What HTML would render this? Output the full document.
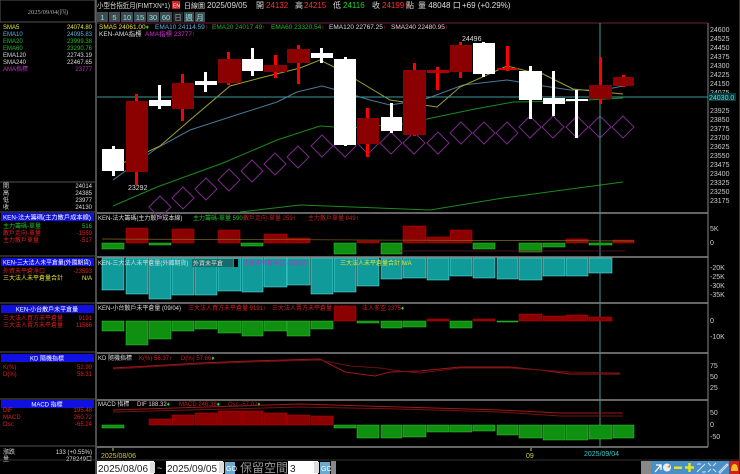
<!DOCTYPE html>
<html><head><meta charset="utf-8"><style>
html,body{margin:0;padding:0;background:#000;width:740px;height:474px;overflow:hidden}
svg{display:block}
text{font-family:"Liberation Sans","Noto Sans CJK TC",sans-serif}
.s{font-family:"Liberation Serif","Noto Serif CJK SC",serif}
</style></head><body>
<svg width="740" height="474" viewBox="0 0 740 474" xmlns="http://www.w3.org/2000/svg">
<rect width="740" height="474" fill="#000"/>
<!-- left panel -->
<rect x="0" y="0" width="95" height="22" fill="#000" stroke="#555" stroke-width="1"/>
<text x="48" y="14" font-size="6.5" fill="#aaa" text-anchor="middle" class="s">2025/09/04(四)</text>
<line x1="96" y1="0" x2="96" y2="474" stroke="#666" stroke-width="1.5"/>
<g font-size="6" class="s">
<text x="3" y="29" fill="#e8e830">SMA5</text><text x="92" y="29" fill="#e8e830" text-anchor="end">24074.80</text>
<text x="3" y="36" fill="#5ab4e0">EMA10</text><text x="92" y="36" fill="#5ab4e0" text-anchor="end">24095.83</text>
<text x="3" y="43" fill="#20c020">EMA20</text><text x="92" y="43" fill="#20c020" text-anchor="end">23999.38</text>
<text x="3" y="50" fill="#20c020">EMA60</text><text x="92" y="50" fill="#20c020" text-anchor="end">23290.76</text>
<text x="3" y="57" fill="#ddd">EMA120</text><text x="92" y="57" fill="#ddd" text-anchor="end">22743.19</text>
<text x="3" y="64" fill="#ddd">SMA240</text><text x="92" y="64" fill="#ddd" text-anchor="end">22467.65</text>
<text x="3" y="71" fill="#c030c0">AMA指標</text><text x="92" y="71" fill="#c030c0" text-anchor="end">23777</text>
<text x="3" y="188" fill="#ddd">開</text><text x="92" y="188" fill="#ddd" text-anchor="end">24014</text>
<text x="3" y="195" fill="#ddd">高</text><text x="92" y="195" fill="#ddd" text-anchor="end">24385</text>
<text x="3" y="202" fill="#ddd">低</text><text x="92" y="202" fill="#ddd" text-anchor="end">23977</text>
<text x="3" y="209" fill="#ddd">收</text><text x="92" y="209" fill="#ddd" text-anchor="end">24130</text>
</g>
<line x1="0" y1="182" x2="95" y2="182" stroke="#555"/>
<g font-size="6" class="s">
<rect x="1" y="213" width="93" height="8" fill="#1010e0"/><text x="47" y="219.5" fill="#fff" text-anchor="middle" textLength="88" lengthAdjust="spacingAndGlyphs">KEN-法大籌碼(主力散戶成本線)</text>
<text x="3" y="228" fill="#20c020">主力籌碼-單量</text><text x="92" y="228" fill="#20c020" text-anchor="end">516</text>
<text x="3" y="235" fill="#e02020">散戶走向-單量</text><text x="92" y="235" fill="#e02020" text-anchor="end">-1559</text>
<text x="3" y="242" fill="#e02020">主力散戶單量</text><text x="92" y="242" fill="#e02020" text-anchor="end">-517</text>
<rect x="1" y="258" width="93" height="8" fill="#1010e0"/><text x="47" y="264.5" fill="#fff" text-anchor="middle" textLength="88" lengthAdjust="spacingAndGlyphs">KEN-三大法人未平倉量(外國期貨)</text>
<text x="3" y="273" fill="#e02020">外資未平倉淨口</text><text x="92" y="273" fill="#e02020" text-anchor="end">-23593</text>
<text x="3" y="280" fill="#e8e830">三大法人未平倉量合計</text><text x="92" y="280" fill="#e8e830" text-anchor="end">N/A</text>
<rect x="1" y="305" width="93" height="8" fill="#1010e0"/><text x="47" y="311.5" fill="#fff" text-anchor="middle">KEN-小台散戶未平倉量</text>
<text x="3" y="320" fill="#e02020">三大法人買方未平倉量</text><text x="92" y="320" fill="#e02020" text-anchor="end">9191</text>
<text x="3" y="327" fill="#e02020">三大法人賣方未平倉量</text><text x="92" y="327" fill="#e02020" text-anchor="end">11566</text>
<rect x="1" y="354" width="93" height="8" fill="#1010e0"/><text x="47" y="360.5" fill="#fff" text-anchor="middle">KD 隨機指標</text>
<text x="3" y="369" fill="#e02020">K(%)</text><text x="92" y="369" fill="#e02020" text-anchor="end">52.99</text>
<text x="3" y="376" fill="#e02020">D(%)</text><text x="92" y="376" fill="#e02020" text-anchor="end">58.31</text>
<rect x="1" y="400" width="93" height="8" fill="#1010e0"/><text x="47" y="406.5" fill="#fff" text-anchor="middle">MACD 指標</text>
<text x="3" y="412" fill="#e02020">DIF</text><text x="92" y="412" fill="#e02020" text-anchor="end">195.48</text>
<text x="3" y="419" fill="#e02020">MACD</text><text x="92" y="419" fill="#e02020" text-anchor="end">260.72</text>
<text x="3" y="426" fill="#e02020">Osc</text><text x="92" y="426" fill="#e02020" text-anchor="end">-65.24</text>
<text x="3" y="454" fill="#ddd">漲跌</text><text x="92" y="454" fill="#ddd" text-anchor="end">133 (+0.55%)</text>
<text x="3" y="461" fill="#ddd">量</text><text x="92" y="461" fill="#ddd" text-anchor="end">278249口</text>
</g>
<g stroke="#555"><line x1="0" y1="212" x2="95" y2="212"/><line x1="0" y1="256" x2="95" y2="256"/><line x1="0" y1="303" x2="95" y2="303"/><line x1="0" y1="352" x2="95" y2="352"/><line x1="0" y1="399" x2="95" y2="399"/><line x1="0" y1="446" x2="95" y2="446"/></g>

<!-- header -->
<text x="97" y="8" font-size="7.5" fill="#ddd" textLength="73" lengthAdjust="spacingAndGlyphs">小型台指近月(FIMTXN*1)</text>
<rect x="172" y="1" width="8" height="8" fill="#d02020"/><text x="173" y="7.5" font-size="5" fill="#fff">EN</text>
<g font-size="8">
<text x="184" y="8" fill="#ddd" font-size="7">日線圖</text>
<text x="207" y="8" fill="#ddd">2025/09/05</text>
<text x="256" y="8" fill="#ddd">開</text><text x="266" y="8" fill="#ff3030">24132</text>
<text x="295" y="8" fill="#ddd">高</text><text x="304" y="8" fill="#ff3030">24215</text>
<text x="333" y="8" fill="#ddd">低</text><text x="343" y="8" fill="#20d020">24116</text>
<text x="372" y="8" fill="#ddd">收</text><text x="382" y="8" fill="#ff3030">24199↑</text>
<text x="406" y="8" fill="#ddd">點</text><text x="418" y="8" fill="#ddd">量 48048 口</text><text x="462" y="8" fill="#ddd">+69 (+0.29%)</text>
</g>
<!-- buttons -->
<g font-size="7.5" fill="#8de0e0" text-anchor="middle">
<rect x="97" y="12" width="11" height="10" fill="#3e4c52"/><text x="102.5" y="20">1</text>
<rect x="109" y="12" width="11" height="10" fill="#3e4c52"/><text x="114.5" y="20">5</text>
<rect x="121" y="12" width="12" height="10" fill="#3e4c52"/><text x="127" y="20">10</text>
<rect x="134" y="12" width="12" height="10" fill="#3e4c52"/><text x="140" y="20">15</text>
<rect x="147" y="12" width="12" height="10" fill="#3e4c52"/><text x="153" y="20">30</text>
<rect x="160" y="12" width="12" height="10" fill="#3e4c52"/><text x="166" y="20">60</text>
<rect x="173" y="12" width="10" height="10" fill="#1c2428"/><text x="178" y="20" fill="#aaa">日</text>
<rect x="184" y="12" width="10" height="10" fill="#3e4c52"/><text x="189" y="20">週</text>
<rect x="195" y="12" width="10" height="10" fill="#3e4c52"/><text x="200" y="20">月</text>
</g>
<!-- main frame -->
<line x1="97" y1="23" x2="708" y2="23" stroke="#6a2040"/>
<line x1="708" y1="23" x2="708" y2="447" stroke="#888"/>
<g stroke="#888" stroke-width="1.5">
<line x1="97" y1="213" x2="708" y2="213"/><line x1="97" y1="257" x2="708" y2="257"/><line x1="97" y1="303" x2="708" y2="303"/><line x1="97" y1="353" x2="708" y2="353"/><line x1="97" y1="400" x2="708" y2="400"/><line x1="97" y1="447" x2="708" y2="447"/>
</g>
<!-- legend -->
<g font-size="6.5">
<text x="99" y="29" fill="#e8e830">SMA5 24061.00<tspan fill="#20d020">♦</tspan></text>
<text x="155" y="29" fill="#5ab4e0">EMA10 24114.59<tspan fill="#f33">↑</tspan></text>
<text x="212" y="29" fill="#20b020">EMA20 24017.49<tspan fill="#f33">↑</tspan></text>
<text x="271" y="29" fill="#20c020">EMA60 23320.54<tspan fill="#f33">↑</tspan></text>
<text x="329" y="29" fill="#ddd">EMA120 22767.25<tspan fill="#f33">↑</tspan></text>
<text x="391" y="29" fill="#e8c8c8">SMA240 22480.95<tspan fill="#f33">↑</tspan></text>
<text x="99" y="36" fill="#ddd">KEN-AMA指標</text>
<text x="145" y="36" fill="#d030d0">AMA指標 23777<tspan fill="#f33">↑</tspan></text>
</g>
<!-- diamonds -->
<g fill="none" stroke="#7a2a8a" stroke-width="1">
<path d="M149,207 l11,-11 l11,11 l-11,11z M172,198 l11,-11 l11,11 l-11,11z M195,189 l11,-11 l11,11 l-11,11z M218,180 l11,-11 l11,11 l-11,11z M241,171 l11,-11 l11,11 l-11,11z M264,164 l11,-11 l11,11 l-11,11z M287,157 l11,-11 l11,11 l-11,11z M311,146 l11,-11 l11,11 l-11,11z M334,146 l11,-11 l11,11 l-11,11z M357,143 l11,-11 l11,11 l-11,11z M380,143 l11,-11 l11,11 l-11,11z M403,143 l11,-11 l11,11 l-11,11z M427,143 l11,-11 l11,11 l-11,11z M450,133 l11,-11 l11,11 l-11,11z M473,133 l11,-11 l11,11 l-11,11z M496,133 l11,-11 l11,11 l-11,11z M519,127 l11,-11 l11,11 l-11,11z M542,127 l11,-11 l11,11 l-11,11z M566,127 l11,-11 l11,11 l-11,11z M589,127 l11,-11 l11,11 l-11,11z M612,127 l11,-11 l11,11 l-11,11z"/>
</g>
<!-- MA lines -->
<polyline fill="none" stroke="#1c8a1c" points="113,206 157,187 223,163 277,140 320,126 350,128 403,124 470,110 513,102 570,101 623,98"/>
<polyline fill="none" stroke="#1c8a1c" points="240,212 300,205 430,210 503,198 623,182"/>
<polyline fill="none" stroke="#4a7a9a" points="113,180 157,148 190,130 230,117 277,102 297,92 322,86 337,90 370,100 390,105 423,100 463,85 507,80 537,85 570,90 603,90 623,86"/>
<polyline fill="none" stroke="#a0a030" points="110,168 130,160 160,146 190,120 230,86 260,78 300,68 320,60 340,70 370,88 390,100 437,107 460,87 507,66 527,71 543,74 573,89 603,92 623,94"/>
<!-- crosshair -->
<line x1="97" y1="97" x2="708" y2="97" stroke="#3a9a9a"/>
<line x1="600" y1="23" x2="600" y2="447" stroke="#3a9a9a"/>
<!-- candles -->
<g>
<rect x="112" y="146" width="3" height="30" fill="#fff"/><rect x="102" y="149" width="22" height="22" fill="#fff"/>
<rect x="135" y="94" width="3" height="91" fill="#f00"/><rect x="126" y="101" width="22" height="71" fill="#8b0000"/>
<rect x="158" y="85" width="3" height="24" fill="#fff"/><rect x="149" y="100" width="22" height="6" fill="#fff"/>
<rect x="181" y="74" width="3" height="47" fill="#f00"/><rect x="172" y="83" width="22" height="26" fill="#8b0000"/>
<rect x="204" y="72" width="3" height="20" fill="#fff"/><rect x="195" y="81" width="22" height="4" fill="#fff"/>
<rect x="227" y="52" width="3" height="33" fill="#f00"/><rect x="218" y="59" width="23" height="24" fill="#8b0000"/>
<rect x="251" y="48" width="3" height="28" fill="#fff"/><rect x="242" y="59" width="21" height="12" fill="#fff"/>
<rect x="274" y="55" width="3" height="23" fill="#f00"/><rect x="264" y="65" width="23" height="7" fill="#8b0000"/>
<rect x="297" y="45" width="3" height="39" fill="#f00"/><rect x="287" y="49" width="23" height="14" fill="#8b0000"/>
<rect x="320" y="48" width="3" height="15" fill="#fff"/><rect x="311" y="53" width="22" height="5" fill="#fff"/>
<rect x="344" y="57" width="3" height="89" fill="#fff"/><rect x="334" y="59" width="22" height="86" fill="#fff"/>
<rect x="366" y="108" width="3" height="49" fill="#f00"/><rect x="357" y="118" width="22" height="26" fill="#8b0000"/>
<rect x="390" y="103" width="3" height="30" fill="#fff"/><rect x="381" y="117" width="21" height="14" fill="#fff"/>
<rect x="413" y="63" width="3" height="73" fill="#f00"/><rect x="403" y="70" width="23" height="65" fill="#8b0000"/>
<rect x="436" y="67" width="3" height="23" fill="#f00"/><rect x="427" y="70" width="22" height="3" fill="#b00000"/>
<rect x="459" y="42" width="3" height="36" fill="#f00"/><rect x="450" y="45" width="22" height="27" fill="#8b0000"/>
<rect x="482" y="42" width="3" height="35" fill="#fff"/><rect x="473" y="43" width="22" height="31" fill="#fff"/>
<rect x="506" y="46" width="3" height="25" fill="#f00"/><rect x="497" y="68" width="21" height="2" fill="#d00"/>
<rect x="529" y="66" width="3" height="53" fill="#fff"/><rect x="519" y="71" width="23" height="29" fill="#fff"/>
<rect x="552" y="71" width="3" height="45" fill="#fff"/><rect x="543" y="98" width="22" height="6" fill="#fff"/>
<rect x="575" y="90" width="3" height="48" fill="#fff"/><rect x="566" y="99" width="22" height="2" fill="#fff"/>
<rect x="599" y="57" width="3" height="47" fill="#f00"/><rect x="589" y="85" width="23" height="14" fill="#8b0000"/>
<rect x="622" y="75" width="3" height="12" fill="#f00"/><rect x="613" y="77" width="21" height="9" fill="#8b0000"/>
</g>
<text x="462" y="41" font-size="7" fill="#ddd">24496</text>
<text x="128" y="190" font-size="7" fill="#ddd">23292</text>
<!-- price axis -->
<g font-size="7" fill="#ccc">
<text x="710" y="32">24600</text><text x="710" y="41">24525</text><text x="710" y="50">24450</text><text x="710" y="59">24375</text><text x="710" y="68">24300</text><text x="710" y="77">24225</text><text x="710" y="86">24150</text><text x="710" y="95">24075</text><text x="710" y="113">23925</text><text x="710" y="122">23850</text><text x="710" y="131">23775</text><text x="710" y="140">23700</text><text x="710" y="149">23625</text><text x="710" y="158">23550</text><text x="710" y="167">23475</text><text x="710" y="176">23400</text><text x="710" y="185">23325</text><text x="710" y="194">23250</text><text x="710" y="203">23175</text>
</g>
<rect x="708" y="93" width="28" height="8" fill="#0a3a3a"/><text x="709" y="100" font-size="7" fill="#40e0e0">24030.0</text>
<!-- panel 1 -->
<text x="98" y="220" font-size="6" fill="#ddd">KEN-法大籌碼(主力散戶成本線)</text>
<text x="193" y="220" font-size="6" fill="#20c020">主力籌碼-單量 590<tspan fill="#f33">↑</tspan></text>
<text x="243" y="220" font-size="6" fill="#c02020">散戶走向-單量 259<tspan fill="#f33">↑</tspan></text>
<text x="308" y="220" font-size="6" fill="#c02020">主力散戶單量 849<tspan fill="#f33">↑</tspan></text>
<g fill="#8b0000" stroke="#c00" stroke-width=".5">
<rect x="126" y="228" width="22" height="15"/><rect x="172" y="229" width="22" height="14"/><rect x="218" y="230" width="22" height="13"/><rect x="264" y="234" width="23" height="9"/><rect x="287" y="238" width="23" height="5"/><rect x="357" y="241" width="22" height="2"/><rect x="403" y="226" width="23" height="17"/><rect x="427" y="237" width="22" height="6"/><rect x="450" y="230" width="22" height="13"/><rect x="566" y="239" width="22" height="4"/><rect x="613" y="240" width="21" height="3"/>
</g>
<g fill="#109010" stroke="#3c3" stroke-width=".5">
<rect x="102" y="243" width="22" height="6"/><rect x="149" y="243" width="22" height="2"/><rect x="241" y="243" width="22" height="3"/><rect x="334" y="243" width="22" height="11"/><rect x="381" y="243" width="21" height="11"/><rect x="473" y="243" width="22" height="6"/><rect x="519" y="243" width="23" height="9"/><rect x="543" y="243" width="22" height="4"/><rect x="589" y="243" width="23" height="2"/>
</g>
<line x1="102" y1="239" x2="634" y2="241" stroke="#8a6a20" stroke-width=".7"/>
<line x1="400" y1="251" x2="625" y2="251" stroke="#6a1030" stroke-width=".7"/>
<g font-size="7" fill="#ccc"><text x="710" y="231">5K</text><text x="710" y="245">0</text></g>
<!-- panel 2 cyan -->
<g fill="#109a9a" stroke="#6ee" stroke-width=".5">
<rect x="102" y="258" width="22" height="32"/><rect x="126" y="258" width="22" height="36"/><rect x="149" y="258" width="22" height="41"/><rect x="172" y="258" width="22" height="37"/><rect x="195" y="258" width="22" height="37"/><rect x="218" y="258" width="23" height="33"/><rect x="242" y="258" width="21" height="34"/><rect x="264" y="258" width="23" height="29"/><rect x="287" y="258" width="23" height="27"/><rect x="311" y="258" width="22" height="36"/><rect x="334" y="258" width="22" height="34"/><rect x="357" y="258" width="22" height="28"/><rect x="381" y="258" width="21" height="21"/><rect x="403" y="258" width="23" height="20"/><rect x="427" y="258" width="22" height="22"/><rect x="450" y="258" width="22" height="18"/><rect x="473" y="258" width="22" height="20"/><rect x="497" y="258" width="21" height="21"/><rect x="519" y="258" width="23" height="22"/><rect x="543" y="258" width="22" height="18"/><rect x="566" y="258" width="22" height="18"/><rect x="589" y="258" width="23" height="15"/>
</g>
<text x="98" y="265" font-size="6" fill="#ddd">KEN-三大法人未平倉量(外國期貨)</text>
<rect x="192" y="259" width="41" height="8" fill="#1a6a6a"/><text x="193" y="265.5" font-size="6" fill="#ddd">外資未平倉</text>
<rect x="234" y="259" width="4" height="8" fill="#000"/>
<text x="243" y="265" font-size="6" fill="#c030c0">外資未平倉淨口 -23593<tspan fill="#f33">↑</tspan></text>
<text x="340" y="265" font-size="6" fill="#e8e830">三大法人未平倉量合計 N/A</text>
<g font-size="7" fill="#ccc"><text x="710" y="270">-20K</text><text x="710" y="279">-25K</text><text x="710" y="288">-30K</text><text x="710" y="297">-35K</text></g>
<!-- panel 3 -->
<text x="98" y="310" font-size="6" fill="#ddd">KEN-小台散戶未平倉量 (09/04)</text>
<text x="188" y="310" font-size="6" fill="#e02020">三大法人買方未平倉量 9191<tspan fill="#f33">↑</tspan></text>
<text x="272" y="310" font-size="6" fill="#e02020">三大法人賣方未平倉量 11566<tspan fill="#3d3">♦</tspan></text>
<text x="362" y="310" font-size="6" fill="#e02020">法人多空 2375<tspan fill="#3d3">♦</tspan></text>
<g fill="#109010" stroke="#3c3" stroke-width=".5">
<rect x="102" y="321" width="22" height="10"/><rect x="126" y="321" width="22" height="24"/><rect x="149" y="321" width="22" height="18"/><rect x="172" y="321" width="22" height="10"/><rect x="195" y="321" width="22" height="8"/><rect x="218" y="321" width="23" height="12"/><rect x="242" y="321" width="21" height="15"/><rect x="264" y="321" width="23" height="10"/><rect x="287" y="321" width="23" height="15"/><rect x="311" y="321" width="22" height="8"/><rect x="357" y="321" width="22" height="2"/><rect x="381" y="321" width="21" height="7"/><rect x="403" y="321" width="23" height="6"/><rect x="450" y="321" width="22" height="7"/><rect x="497" y="321" width="21" height="1"/>
</g>
<g fill="#8b0000" stroke="#c00" stroke-width=".5">
<rect x="334" y="306" width="22" height="15"/><rect x="427" y="319" width="22" height="2"/><rect x="473" y="319" width="22" height="2"/><rect x="519" y="314" width="23" height="7"/><rect x="543" y="316" width="22" height="5"/><rect x="566" y="315" width="22" height="6"/><rect x="589" y="317" width="23" height="4"/>
</g>
<g font-size="7" fill="#ccc"><text x="710" y="323">0</text><text x="710" y="339">-10K</text></g>
<!-- KD -->
<text x="98" y="360" font-size="6" fill="#ddd">KD 隨機指標</text>
<text x="139" y="360" font-size="6" fill="#e02020">K(%) 56.37<tspan fill="#f33">↑</tspan></text>
<text x="181" y="360" font-size="6" fill="#c02020">D(%) 57.66<tspan fill="#3d3">♦</tspan></text>
<polyline fill="none" stroke="#a01818" points="113,368 200,363 250,361 320,359 345,372 375,376 390,372 420,371 460,367 510,367 540,370 570,374 620,374"/>
<polyline fill="none" stroke="#6a1010" points="113,369 200,364 250,362 320,360 350,366 380,368 400,371 420,373 460,368 510,368 540,370 570,372 620,373"/>
<g font-size="7" fill="#ccc"><text x="710" y="368">75</text><text x="710" y="379">50</text><text x="710" y="390">25</text></g>
<!-- MACD -->
<text x="98" y="406" font-size="6" fill="#ddd">MACD 指標</text>
<text x="137" y="406" font-size="6" fill="#e8c8c8">DIF 188.32<tspan fill="#3d3">♦</tspan></text>
<text x="179" y="406" font-size="6" fill="#c02020">MACD 246.38<tspan fill="#3d3">♦</tspan></text>
<text x="228" y="406" font-size="6" fill="#a02020">Osc -57.02<tspan fill="#3d3">♦</tspan></text>
<polyline fill="none" stroke="#a01818" points="113,410 300,404 400,407 500,410 560,413 623,413"/>
<polyline fill="none" stroke="#7a1010" points="113,412 300,407 400,409 500,412 560,416 623,416"/>
<g fill="#8b0000" stroke="#c00" stroke-width=".5">
<rect x="149" y="419" width="22" height="6"/><rect x="172" y="415" width="22" height="10"/><rect x="195" y="413" width="22" height="12"/><rect x="218" y="411" width="23" height="14"/><rect x="242" y="411" width="21" height="14"/><rect x="264" y="413" width="23" height="12"/><rect x="287" y="415" width="23" height="10"/><rect x="311" y="416" width="22" height="9"/>
</g>
<g fill="#109010" stroke="#3c3" stroke-width=".5">
<rect x="102" y="425" width="22" height="3"/><rect x="334" y="425" width="22" height="3"/><rect x="357" y="425" width="22" height="13"/><rect x="381" y="425" width="21" height="13"/><rect x="403" y="425" width="23" height="12"/><rect x="427" y="425" width="22" height="7"/><rect x="450" y="425" width="22" height="7"/><rect x="473" y="425" width="22" height="6"/><rect x="497" y="425" width="21" height="10"/><rect x="519" y="425" width="23" height="13"/><rect x="543" y="425" width="22" height="15"/><rect x="566" y="425" width="22" height="15"/><rect x="589" y="425" width="23" height="14"/><rect x="613" y="425" width="21" height="13"/>
</g>
<g font-size="7" fill="#ccc"><text x="710" y="415">50</text><text x="710" y="427">0</text><text x="710" y="439">-50</text></g>
<!-- date axis -->
<line x1="113" y1="448" x2="113" y2="451" stroke="#cc3"/>
<text x="101" y="458" font-size="7" fill="#cc3">2025/08/06</text>
<line x1="531" y1="448" x2="531" y2="451" stroke="#cc3"/>
<text x="526" y="458" font-size="7" fill="#cc3">09</text>
<text x="584" y="456" font-size="7" fill="#3cc">2025/09/04</text>
<!-- controls -->
<line x1="0" y1="460" x2="740" y2="460" stroke="#333"/>
<rect x="97" y="461" width="57" height="13" fill="#fff"/><text x="98" y="472" font-size="10" fill="#222">2025/08/06</text>
<rect x="150" y="462" width="5" height="11" fill="#ddd"/>
<text x="157" y="471" font-size="9" fill="#ccc">~</text>
<rect x="166" y="461" width="57" height="13" fill="#fff"/><text x="167" y="472" font-size="10" fill="#222">2025/09/05</text>
<rect x="219" y="462" width="5" height="11" fill="#ddd"/>
<rect x="225" y="462" width="10" height="12" fill="#6aaad0"/><text x="226" y="471" font-size="7" fill="#fff">GO</text>
<text x="240" y="472" font-size="12" fill="#999">保留空間</text>
<rect x="288" y="461" width="30" height="13" fill="#fff"/><text x="290" y="472" font-size="10" fill="#222">3</text>
<rect x="314" y="462" width="5" height="11" fill="#ddd"/>
<rect x="320" y="462" width="10" height="12" fill="#6aaad0"/><text x="321" y="471" font-size="7" fill="#fff">GO</text>
<rect x="331" y="461" width="5" height="13" fill="#888"/>
<!-- toolbar -->
<rect x="641" y="461" width="99" height="13" fill="#4a90c8"/>
<rect x="641" y="461" width="10" height="13" fill="#888"/>
<g stroke="#fff" stroke-width="1.3" fill="none">
<path d="M655,472 l6,-7 m-5,0 h5 v5"/>
<circle cx="667" cy="467.5" r="4" fill="#eee" stroke="none"/><path d="M667,467.5 l3,-3 v3z" fill="#e08020" stroke="none"/>
</g>
<rect x="674" y="466.5" width="8" height="2.5" fill="#e8e020"/>
<path d="M685,467.5 h9 M689.5,463 v9" stroke="#e8e020" stroke-width="2.5"/>
<g stroke="#dde" stroke-width="1" fill="none">
<path d="M697,472 l8,-8 m-7,1 v-1 h3 M705,471 v1 h-3"/>
<path d="M708,463 l3,3 m5,-3 l-3,3 m-5,6 l3,-3 m5,3 l-3,-3"/>
<path d="M719,472 l8,-8 l1,1 l-8,8z"/>
</g>
<rect x="729" y="461" width="11" height="13" fill="#d02020"/>
<path d="M731,471 q0,-7 3.5,-7 q3.5,0 3.5,7z" fill="#f0c020"/>
<line x1="739.5" y1="0" x2="739.5" y2="474" stroke="#6a2020"/>
</svg>
</body></html>
